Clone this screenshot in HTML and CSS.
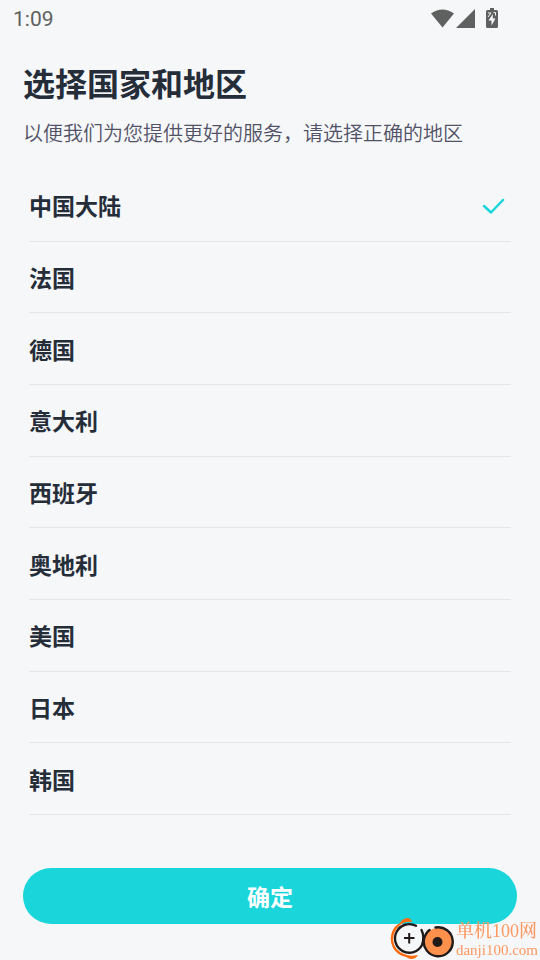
FILE: index.html
```html
<!DOCTYPE html>
<html lang="zh-CN">
<head>
<meta charset="utf-8">
<meta name="viewport" content="width=device-width, initial-scale=1">
<title>选择国家和地区</title>
<link rel="stylesheet" href="styles.css">
</head>
<body>
<div class="status">
  <span class="clock">1:09</span>
  <svg class="status-icons" width="68" height="22" viewBox="0 0 68 22" fill="#5f6160" aria-hidden="true">
    <path d="M0 5.5Q11.500-2.500 23 5.500L11.500 19.500Z"/>
    <path d="M44 1V20H25Z"/>
    <path d="M59 0h4v2h2.500q1.500 0 1.500 1.500v15q0 1.500-1.500 1.500h-9q-1.500 0-1.500-1.500v-15q0-1.500 1.500-1.500h2.500z"/>
    <path d="M61.800 6L57.500 12.500H60.500V17.500L64.500 10.500H61.800Z" fill="#f5f7f9"/>
    <path d="M57 5h3l-3 4M62.500 4.500h2v3" fill="none" stroke="#f5f7f9" stroke-width="1"/>
  </svg>
</div>
<form class="page">
  <h1 class="title">选择国家和地区</h1>
  <p class="subtitle">以便我们为您提供更好的服务，请选择正确的地区</p>
  <div class="regions" role="radiogroup" aria-label="国家和地区">
    <label class="region"><input type="radio" name="region" checked><span>中国大陆</span><svg class="check" width="24" height="18" viewBox="0 0 24 18" aria-hidden="true"><path d="M3 10L10 16.500L22 4"/></svg></label>
    <label class="region"><input type="radio" name="region"><span>法国</span></label>
    <label class="region"><input type="radio" name="region"><span>德国</span></label>
    <label class="region"><input type="radio" name="region"><span>意大利</span></label>
    <label class="region"><input type="radio" name="region"><span>西班牙</span></label>
    <label class="region"><input type="radio" name="region"><span>奥地利</span></label>
    <label class="region"><input type="radio" name="region"><span>美国</span></label>
    <label class="region"><input type="radio" name="region"><span>日本</span></label>
    <label class="region"><input type="radio" name="region"><span>韩国</span></label>
  </div>
  <button class="confirm" type="button">确定</button>
</form>
<div class="watermark">
  <svg width="64" height="44" viewBox="0 0 64 44" fill="none" aria-hidden="true">
    <path d="M10 7Q12 3 17 2Q21 2 22 6Q14 5 9 10Q3 16 3 24Q4 34 14 38Q20 41 28 39Q26 43 21 43Q19 43 16 41Q7 39 3 32Q-1 24 2 16Q4 10 10 7Z" fill="#ff6a0c"/>
    <circle cx="19.500" cy="22.500" r="14" fill="#f5f7f9"/>
    <path d="M26 9.800A14.300 14.300 0 1 0 32 29Q35 21 31.500 14" stroke="#221a18" stroke-width="2.400" stroke-linecap="round"/>
    <path d="M14 22H24.500M19.200 17V27.500" stroke="#221a18" stroke-width="2"/>
    <circle cx="48" cy="26" r="14" fill="#ff914d"/>
    <path d="M45.500 11.500A14.500 14.500 0 1 1 34 23Q35.500 17 39.500 14" stroke="#221a18" stroke-width="2.400" stroke-linecap="round"/>
    <circle cx="47.500" cy="26" r="5" fill="#221a18"/>
  </svg>
  <div class="brand"><span class="brand-name">单机100网</span><span class="brand-url">danji100.com</span></div>
</div>
</body>
</html>
```
FILE: styles.css
```css
* { box-sizing: border-box; }

body {
  margin: 0;
  min-height: 100vh;
  display: flex;
  flex-direction: column;
  background: #f5f7f9;
  color: #252d39;
  font-family: "Noto Sans CJK SC", sans-serif;
}

.status {
  display: flex;
  justify-content: space-between;
  align-items: center;
  height: 37px;
  padding: 0 41px 0 13px;
}

.clock {
  font: 400 21px/36px Roboto, sans-serif;
  color: #5f6160;
}

.page {
  flex: 1;
  display: flex;
  flex-direction: column;
  padding: 23px 23px 36px;
}

.title {
  margin: 0;
  font-size: 32px;
  line-height: 44px;
  font-weight: 700;
}

.subtitle {
  margin: 14px 0 22px;
  font-size: 20px;
  line-height: 30px;
  font-weight: 350;
  color: #525266;
}

.regions {
  flex: 1;
  display: flex;
  flex-direction: column;
  padding: 0 6px;
}

.region {
  flex: 1;
  display: flex;
  align-items: center;
  justify-content: space-between;
  border-bottom: 1px solid #e4e6e8;
  font-size: 23px;
  line-height: 34px;
  font-weight: 700;
  cursor: pointer;
}

.region input {
  position: absolute;
  opacity: 0;
}

.check {
  margin-right: 6px;
  fill: none;
  stroke: #1ad5da;
  stroke-width: 2.5;
  stroke-linecap: round;
  stroke-linejoin: round;
}

.confirm {
  height: 56px;
  margin-top: 53px;
  border: 0;
  border-radius: 28px;
  background: #1ad5da;
  color: #fff;
  font: 700 23px/34px "Noto Sans CJK SC", sans-serif;
}

.watermark {
  position: fixed;
  right: 2px;
  bottom: 0;
  display: flex;
  align-items: center;
  gap: 2px;
  color: #ff9860;
  pointer-events: none;
}

.brand {
  display: flex;
  flex-direction: column;
  padding-top: 3px;
  font-family: "Liberation Serif", "Noto Serif CJK SC", "Noto Sans CJK SC", serif;
  font-weight: 500;
  white-space: nowrap;
}

.brand-name {
  font-size: 18px;
  line-height: 20px;
}

.brand-url {
  font-size: 15px;
  line-height: 18px;
}
```
